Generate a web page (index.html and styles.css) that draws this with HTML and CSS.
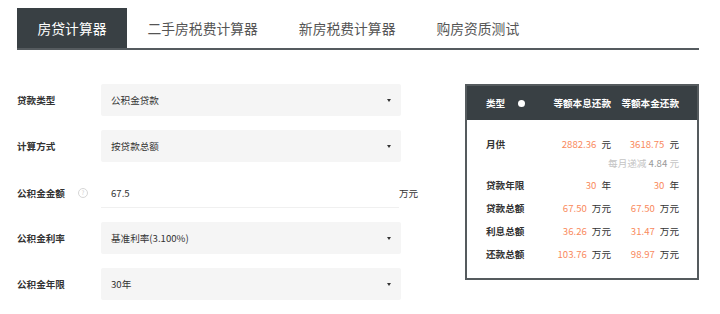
FILE: index.html
```html
<!DOCTYPE html>
<html lang="zh-CN">
<head>
    <meta charset="UTF-8">
    <title>房贷计算器</title>
    <link rel="stylesheet" href="styles.css">
</head>
<body>

    <div class="page">
        <ul class="tabs">
            <li class="tab active">房贷计算器</li>
            <li class="tab">二手房税费计算器</li>
            <li class="tab">新房税费计算器</li>
            <li class="tab">购房资质测试</li>
        </ul>

        <div class="content">
            <form class="loan-form">
                <div class="row">
                    <label>贷款类型</label>
                    <div class="select">公积金贷款<span class="caret"></span></div>
                </div>
                <div class="row">
                    <label>计算方式</label>
                    <div class="select">按贷款总额<span class="caret"></span></div>
                </div>
                <div class="row input-row">
                    <label>公积金金额<span class="help">?</span></label>
                    <div class="field">67.5</div>
                    <span class="unit">万元</span>
                </div>
                <div class="row">
                    <label>公积金利率</label>
                    <div class="select">基准利率(3.100%)<span class="caret"></span></div>
                </div>
                <div class="row">
                    <label>公积金年限</label>
                    <div class="select">30年<span class="caret"></span></div>
                </div>
            </form>

            <div class="result">
                <div class="result-head grid">
                    <div>类型<span class="dot"></span></div>
                    <div class="num">等额本息还款</div>
                    <div class="num">等额本金还款</div>
                </div>
                <div class="result-body">
                    <div class="grid line">
                        <div class="name">月供</div>
                        <div class="num"><span class="val">2882.36</span><span class="u">元</span></div>
                        <div class="num"><span class="val">3618.75</span><span class="u">元</span></div>
                    </div>
                    <div class="grid sub">
                        <div></div>
                        <div class="num span2">每月递减 <b>4.84</b> 元</div>
                    </div>
                    <div class="grid line">
                        <div class="name">贷款年限</div>
                        <div class="num"><span class="val">30</span><span class="u">年</span></div>
                        <div class="num"><span class="val">30</span><span class="u">年</span></div>
                    </div>
                    <div class="grid line">
                        <div class="name">贷款总额</div>
                        <div class="num"><span class="val">67.50</span><span class="u">万元</span></div>
                        <div class="num"><span class="val">67.50</span><span class="u">万元</span></div>
                    </div>
                    <div class="grid line">
                        <div class="name">利息总额</div>
                        <div class="num"><span class="val">36.26</span><span class="u">万元</span></div>
                        <div class="num"><span class="val">31.47</span><span class="u">万元</span></div>
                    </div>
                    <div class="grid line">
                        <div class="name">还款总额</div>
                        <div class="num"><span class="val">103.76</span><span class="u">万元</span></div>
                        <div class="num"><span class="val">98.97</span><span class="u">万元</span></div>
                    </div>
                </div>
            </div>
        </div>
    </div>

</body>
</html>
```

FILE: styles.css
```css
body {
    margin: 0;
    font-family: "Noto Sans CJK SC", "Noto Sans", sans-serif;
    background: #fff;
    color: #333;
}

.page {
    padding: 8px 21px 0 17px;
}

.tabs {
    list-style: none;
    margin: 0;
    padding: 0;
    display: flex;
    border-bottom: 2px solid #555b5f;
}

.tab {
    height: 40px;
    line-height: 40px;
    padding: 0 20.5px;
    font-size: 13.8px;
    color: #555;
}

.tab.active {
    background: #394044;
    color: #fff;
}

.content {
    display: flex;
    justify-content: space-between;
    margin-top: 34px;
}

.loan-form {
    width: 404px;
    display: flex;
    flex-direction: column;
    gap: 14px;
}

.row {
    display: flex;
    align-items: center;
    font-size: 9.6px;
}

.row label {
    width: 84px;
    font-weight: bold;
    color: #333;
    display: flex;
    align-items: center;
}

.select {
    width: 300px;
    height: 32px;
    box-sizing: border-box;
    padding: 0 10px;
    background: #f5f5f5;
    border-radius: 2px;
    display: flex;
    align-items: center;
    justify-content: space-between;
    color: #333;
}

.caret {
    width: 0;
    height: 0;
    border-left: 2.5px solid transparent;
    border-right: 2.5px solid transparent;
    border-top: 3px solid #333;
}

.input-row {
    margin-top: 2px;
    height: 30px;
}

.field {
    width: 298px;
    height: 30px;
    box-sizing: border-box;
    padding-left: 10px;
    display: flex;
    align-items: center;
    border-bottom: 1px solid #f0f0f0;
}

.unit {
    align-self: center;
}

.help {
    width: 8px;
    height: 8px;
    margin-left: 13px;
    border: 1px solid #d6d6d6;
    border-radius: 50%;
    font-size: 6px;
    line-height: 8px;
    text-align: center;
    color: #ccc;
    font-weight: normal;
}

.result {
    width: 234px;
    box-sizing: border-box;
    border: 2px solid #555b5e;
    align-self: flex-start;
}

.grid {
    display: grid;
    grid-template-columns: 1fr 58px 58px;
    column-gap: 10px;
    align-items: center;
}

.result-head {
    height: 34px;
    background: #394044;
    color: #fff;
    font-weight: bold;
    font-size: 9.6px;
    padding: 0 18px 0 19px;
}

.result-head > div:first-child {
    display: flex;
    align-items: center;
}

.dot {
    width: 7px;
    height: 7px;
    margin-left: 13px;
    border-radius: 50%;
    background: #fff;
}

.num {
    text-align: right;
    white-space: nowrap;
}

.result-body {
    padding: 13px 18px 12px 19px;
    font-size: 9.6px;
}

.line {
    line-height: 23px;
}

.name {
    font-weight: bold;
    color: #333;
}

.val {
    color: #f98a5d;
}

.u {
    margin-left: 5px;
    color: #333;
}

.sub {
    line-height: 14px;
    margin-bottom: 4px;
    color: #c4c4c4;
}

.sub .span2 {
    grid-column: 2 / 4;
}

.sub b {
    font-weight: normal;
    color: #999;
}
```
